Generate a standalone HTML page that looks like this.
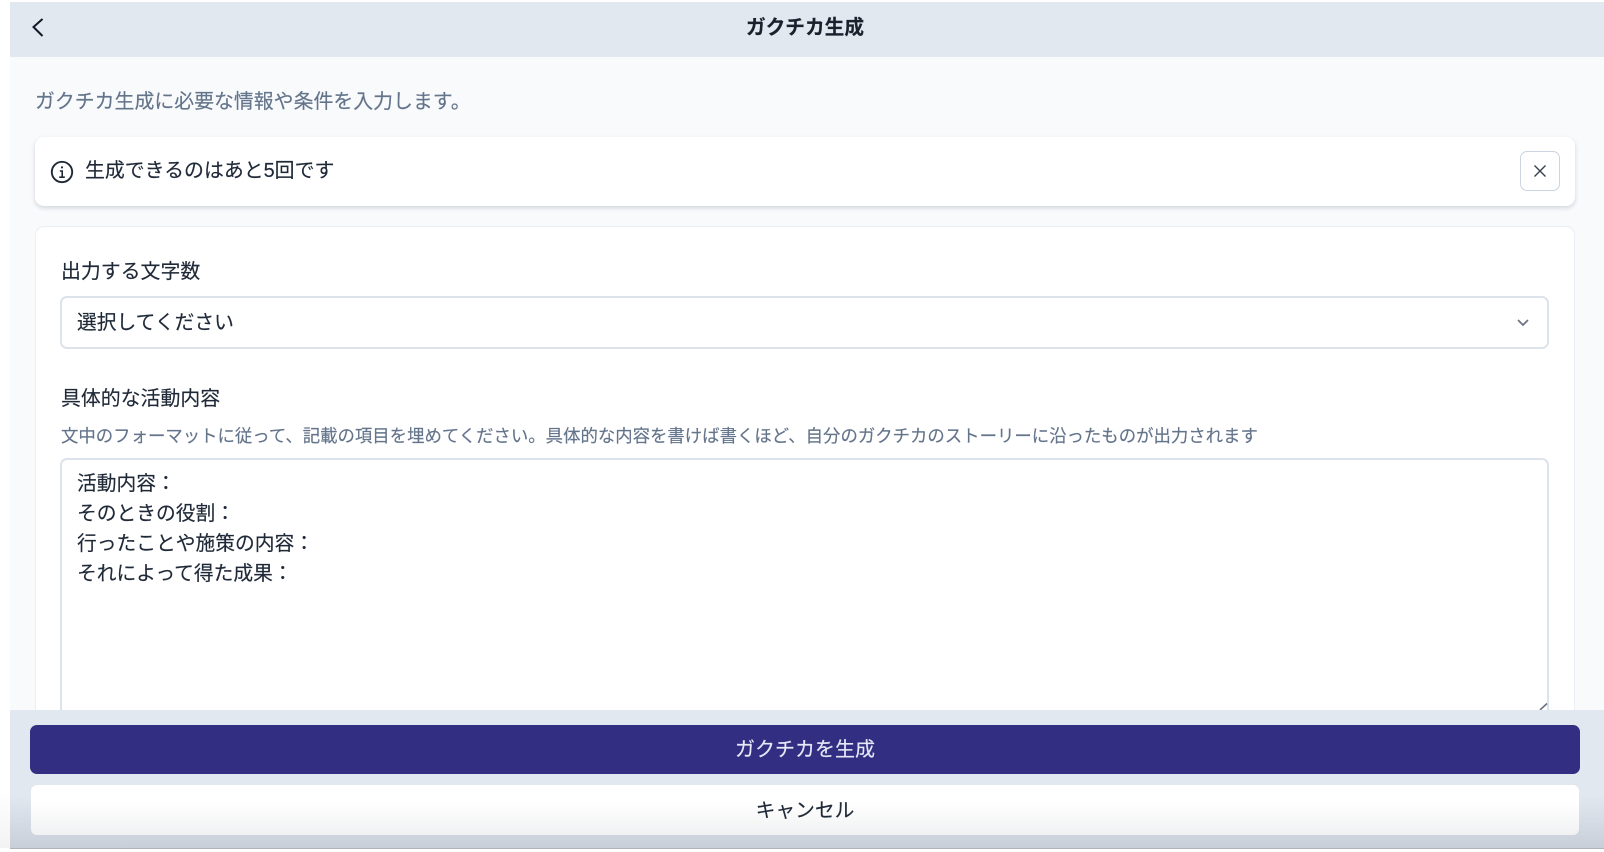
<!DOCTYPE html>
<html lang="ja"><head><meta charset="utf-8"><title>ガクチカ生成</title>
<style>
html,body{margin:0;padding:0;background:#fff}
#r{position:relative;width:1604px;height:852px;overflow:hidden;background:#fff;font-family:"Liberation Sans","Noto Sans CJK JP",sans-serif;color:#1f2937;filter:blur(.35px)}
#r div,#r svg{position:absolute;box-sizing:border-box}
.t{white-space:nowrap;line-height:30px;font-size:19.75px;-webkit-text-stroke:.15px currentColor}
</style></head><body>
<div id="r">
<div style="left:10px;top:2px;width:1594px;height:846px;background:#f8fafc"></div>
<div style="left:10px;top:2px;width:1594px;height:55px;background:#e2e8f0"></div>
<svg style="left:28px;top:14px" width="22" height="26" viewBox="0 0 22 26" fill="none" stroke="#111827" stroke-width="2"><path d="M14.5 5 L5.5 13 L14.5 22" stroke-linejoin="miter"/></svg>
<div class="t" style="left:0;width:1610px;text-align:center;top:12.5px;font-size:19.7px;font-weight:700;color:#1a202c">ガクチカ生成</div>
<div class="t" style="left:35px;top:87px;font-size:19.9px;color:#64748b">ガクチカ生成に必要な情報や条件を入力します。</div>

<div style="left:35px;top:137px;width:1540px;height:69px;background:#fff;border-radius:9px;box-shadow:0 2px 5px rgba(15,23,42,.16)"></div>
<svg style="left:50px;top:160px" width="24" height="24" viewBox="0 0 24 24" fill="none" stroke="#1f2937" stroke-width="1.9"><circle cx="12" cy="12" r="10.2"/><path d="M9.8 11h2.4v6.2M9.2 17.2h5.6" stroke-width="1.6"/><circle cx="12" cy="7.4" r="1.1" fill="#1f2937" stroke="none"/></svg>
<div class="t" style="left:85px;top:156px;font-size:19.9px">生成できるのはあと5回です</div>
<div style="left:1520px;top:151px;width:40px;height:40px;background:#fff;border:1.5px solid #cbd5e1;border-radius:7px"></div>
<svg style="left:1532px;top:163px" width="16" height="16" viewBox="0 0 16 16" fill="none" stroke="#374151" stroke-width="1.4"><path d="M2.5 2.5 L13.5 13.5 M13.5 2.5 L2.5 13.5"/></svg>

<div style="left:35px;top:226px;width:1540px;height:560px;background:#fff;border:1.5px solid #e9eef5;border-radius:9px"></div>
<div class="t" style="left:61px;top:257px;font-size:19.9px">出力する文字数</div>
<div style="left:60px;top:296px;width:1489px;height:53px;background:#fff;border:2px solid #dde3ea;border-radius:7px"></div>
<div class="t" style="left:77px;top:308px">選択してください</div>
<svg style="left:1516px;top:315px" width="14" height="14" viewBox="0 0 14 14" fill="none" stroke="#6b7280" stroke-width="1.7"><path d="M2 5 L7 10 L12 5"/></svg>

<div class="t" style="left:61px;top:384px;font-size:19.9px">具体的な活動内容</div>
<div class="t" style="left:61px;top:421px;font-size:17.4px;color:#64748b">文中のフォーマットに従って、記載の項目を埋めてください。具体的な内容を書けば書くほど、自分のガクチカのストーリーに沿ったものが出力されます</div>
<div style="left:60px;top:458px;width:1489px;height:300px;background:#fff;border:2px solid #dde3ea;border-radius:7px"></div>
<div class="t" style="left:77px;top:469px">活動内容：</div>
<div class="t" style="left:77px;top:499px">そのときの役割：</div>
<div class="t" style="left:77px;top:529px">行ったことや施策の内容：</div>
<div class="t" style="left:77px;top:559px">それによって得た成果：</div>
<svg style="left:1538px;top:702px" width="10" height="8" viewBox="0 0 10 8" fill="none" stroke="#6b7280" stroke-width="1.6"><path d="M2 8 L9 1.5"/></svg>

<div style="left:10px;top:710px;width:1594px;height:138px;background:linear-gradient(#e2e8f0 0,#e2e8f0 62%,#c9cfd9 100%)"></div>
<div style="left:0;top:790px;width:10px;height:58px;background:linear-gradient(#fff,#f3f3f3)"></div>
<div style="left:10px;top:848px;width:1594px;height:1px;background:#aeb3bc"></div>
<div style="left:30px;top:725px;width:1550px;height:49px;background:#322e81;border-radius:7px"></div>
<div class="t" style="left:0;width:1610px;text-align:center;top:734.5px;font-size:20px;color:#e6e8f7">ガクチカを生成</div>
<div style="left:31px;top:785px;width:1548px;height:50px;background:linear-gradient(#fff 35%,#f0f1f2 100%);border-radius:6px"></div>
<div class="t" style="left:0;width:1610px;text-align:center;top:796px;font-size:19.75px;color:#1f2937">キャンセル</div>
</div>
</body></html>
